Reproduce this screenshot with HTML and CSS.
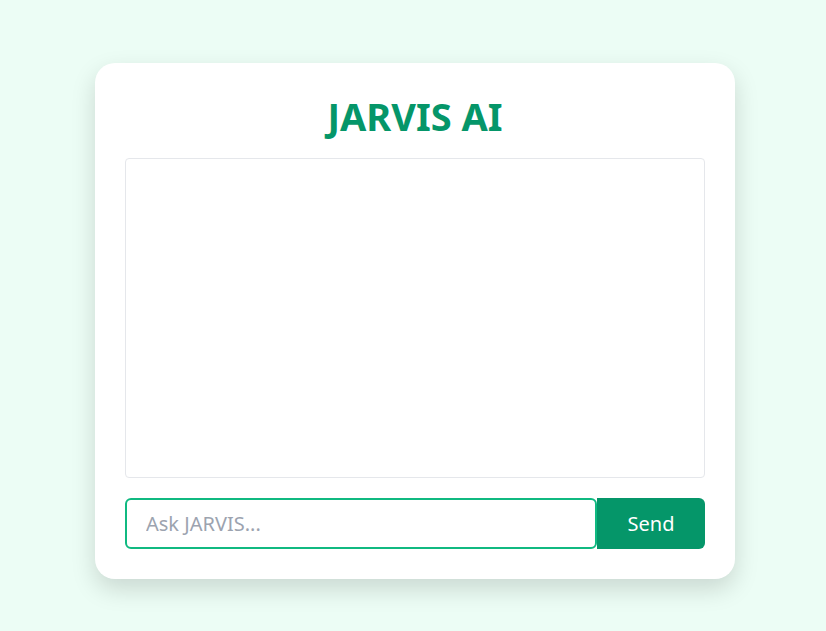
FILE: index.html
```html
<!DOCTYPE html>
<html lang="en">
<head>
<meta charset="utf-8">
<title>JARVIS AI</title>
<link rel="stylesheet" href="styles.css">
</head>
<body>
<div class="page">
  <div class="card">
    <h1 class="title">JARVIS AI</h1>
    <div class="chat"></div>
    <div class="input-row">
      <input class="ask" type="text" placeholder="Ask JARVIS..." autofocus>
      <button class="send">Send</button>
    </div>
  </div>
</div>
</body>
</html>
```
FILE: styles.css
```css
html, body {
  margin: 0;
  padding: 0;
  background: #ecfdf5;
  font-family: "Noto Sans", "Open Sans", sans-serif;
}
.page {
  display: flex;
  justify-content: center;
  align-items: flex-start;
  min-height: 100vh;
  box-sizing: border-box;
  padding: 63px 0 40px 4px;
}
.card {
  width: 640px;
  box-sizing: border-box;
  background: #ffffff;
  border-radius: 20px;
  padding: 30px;
  box-shadow: 0 10px 25px rgba(0, 0, 0, 0.15);
}
.title {
  margin: 0 0 19px;
  text-align: center;
  color: #059669;
  font-size: 38px;
  font-weight: 700;
  line-height: 46px;
}
.chat {
  height: 318px;
  border: 1px solid #e5e7eb;
  border-radius: 4px;
}
.input-row {
  display: flex;
  margin-top: 20px;
  height: 51px;
}
.ask {
  flex: 1;
  min-width: 0;
  box-sizing: border-box;
  height: 51px;
  border: 2px solid #10b981;
  border-radius: 6px;
  padding: 0 19px;
  font-family: inherit;
  font-size: 20px;
  color: #111827;
  caret-color: #000000;
  outline: none;
}
.ask::placeholder {
  color: #9ca3af;
}
.send {
  width: 108px;
  height: 51px;
  border: none;
  background: #059669;
  color: #ffffff;
  font-family: inherit;
  font-size: 20px;
  border-radius: 0 6px 6px 0;
  padding: 0;
}
```
